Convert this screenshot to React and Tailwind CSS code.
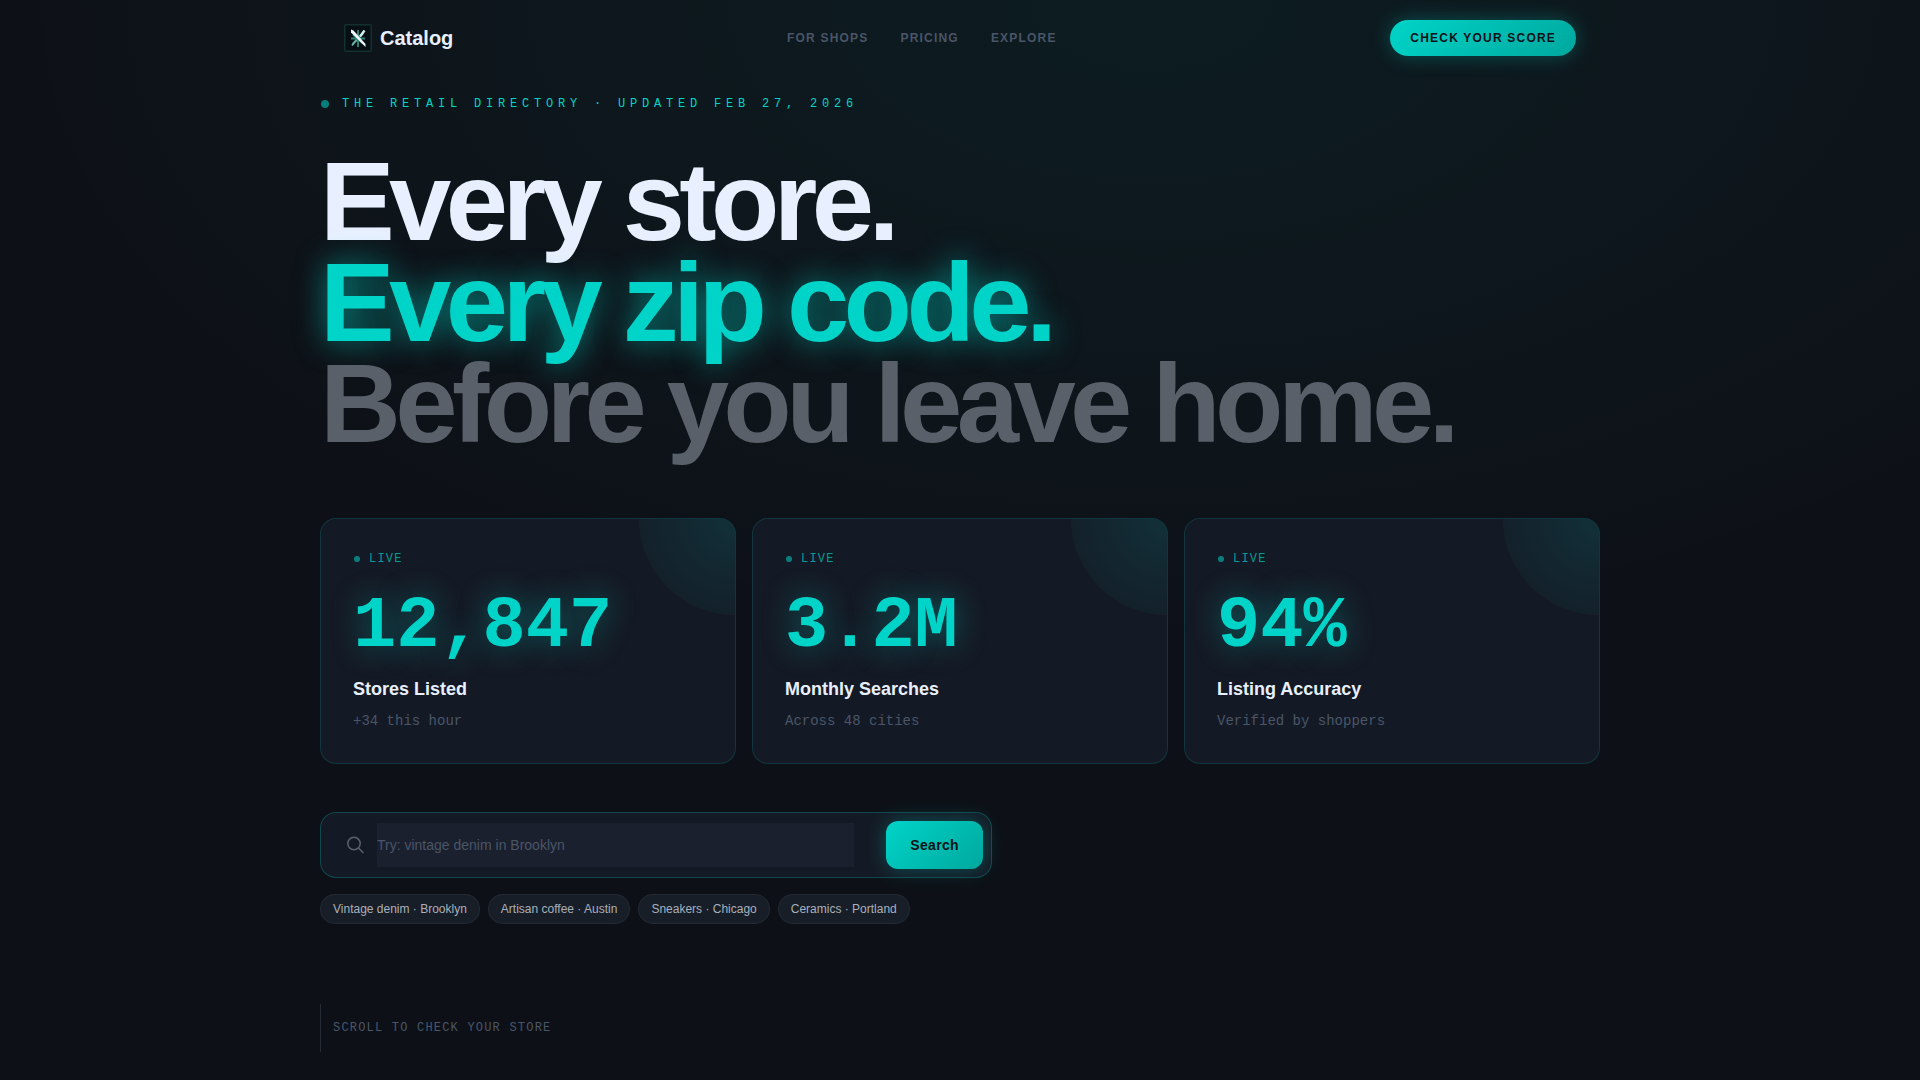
import React, { useState } from "react";

const navLinks = ["For Shops", "Pricing", "Explore"];

const stats = [
  { value: "12,847", label: "Stores Listed", note: "+34 this hour" },
  { value: "3.2M", label: "Monthly Searches", note: "Across 48 cities" },
  { value: "94%", label: "Listing Accuracy", note: "Verified by shoppers" },
];

const suggestions = [
  "Vintage denim · Brooklyn",
  "Artisan coffee · Austin",
  "Sneakers · Chicago",
  "Ceramics · Portland",
];

const Logo = () => (
  <svg width="28" height="28" viewBox="0 0 28 28" fill="none" aria-hidden="true">
    <rect x="0.75" y="0.75" width="26.5" height="26.5" rx="1" fill="#080f14" stroke="#12302f" strokeWidth="1.5" />
    <path d="M14 6v17M7 14.5h14M8.5 20l11-11M9 10.5l10 9" stroke="#2f7f74" strokeWidth="2" />
    <path d="M20.5 6.5L16 12.5" stroke="#d5efeb" strokeWidth="2.4" />
    <path d="M12.5 16L8 21.5" stroke="#6fb5a9" strokeWidth="1.8" />
    <path d="M7 5.5l2.5 1L21.5 20v3L7 8.5z" fill="#f1f8fa" />
  </svg>
);

const Navbar = () => (
  <header className="mx-auto flex w-full max-w-7xl items-center justify-between px-6 py-5">
    <a href="#" className="flex items-center gap-2 text-xl leading-7 font-bold text-[#e8f0ff]">
      <Logo />
      Catalog
    </a>
    <nav className="flex items-center gap-8">
      {navLinks.map((link) => (
        <a
          key={link}
          href="#"
          className="text-xs font-bold tracking-widest text-[#4a5568] uppercase"
        >
          {link}
        </a>
      ))}
    </nav>
    <button className="rounded-full bg-linear-135 from-[#00d4c8] to-[#00a89e] px-5 py-[10px] text-xs leading-4 font-bold tracking-widest text-[#0d1117] uppercase shadow-[0_0_20px_rgba(0,212,200,0.3)]">
      Check your score
    </button>
  </header>
);

const StatCard = ({ value, label, note }) => (
  <div className="relative flex-1 overflow-hidden rounded-2xl border border-[#00d4c8]/15 bg-[#141a25] p-8">
    <div className="absolute top-0 right-0 size-48 translate-x-1/2 -translate-y-1/2 rounded-full bg-radial from-[#00d4c8]/12 to-[#00d4c8]/0" />
    <p className="mb-6 flex items-center gap-2 font-['Liberation_Mono',monospace] text-xs tracking-widest text-[#00d4c8]/70">
      <span className="mx-px size-[6px] rounded-full bg-[#00d4c8]/55" />
      LIVE
    </p>
    <p className="mb-3 font-['Liberation_Mono',monospace] text-7xl leading-none font-bold text-[#00d4c8] [text-shadow:0_0_30px_rgba(0,212,200,0.4)]">
      {value}
    </p>
    <p className="mb-2 text-lg leading-7 font-bold text-[#e8f0ff]">{label}</p>
    <p className="font-['Liberation_Mono',monospace] text-sm text-[#4a5568]">{note}</p>
  </div>
);

const SearchForm = () => {
  const [query, setQuery] = useState("");

  return (
    <form
      onSubmit={(e) => e.preventDefault()}
      className="flex max-w-2xl items-center rounded-2xl border border-[#00d4c8]/25 bg-[#141a25] p-2"
    >
      <label htmlFor="search" aria-label="Search stores" className="pr-3 pl-[18px]">
        <svg width="18" height="18" viewBox="0 0 18 18" fill="none" stroke="#59616d" strokeWidth="1.5" aria-hidden="true">
          <circle cx="7" cy="7.5" r="6.2" />
          <path d="M11.5 12L16 16.5" strokeLinecap="round" />
        </svg>
      </label>
      <input
        id="search"
        type="text"
        value={query}
        onChange={(e) => setQuery(e.target.value)}
        placeholder="Try: vintage denim in Brooklyn"
        className="mr-8 min-w-0 flex-1 bg-[#1a202d] py-3 text-sm text-[#e8f0ff] outline-none placeholder:text-[#4a5568]"
      />
      <button
        type="submit"
        className="rounded-xl bg-linear-135 from-[#00d4c8] to-[#00a89e] px-6 py-[14px] text-sm font-bold tracking-wide text-[#0d1117] shadow-[0_0_20px_rgba(0,212,200,0.3)]"
      >
        Search
      </button>
    </form>
  );
};

export default function App() {
  return (
    <div className="min-h-screen bg-[#0d1117] bg-[radial-gradient(ellipse_60%_60%_at_60%_0%,rgba(0,212,200,0.06),transparent)] font-['Liberation_Sans',Arial,sans-serif]">
      <Navbar />
      <main className="mx-auto w-full max-w-7xl">
        <p className="mt-5 flex items-center gap-3 font-['Liberation_Mono',monospace] text-xs tracking-[0.4em] text-[#00d4c8] uppercase">
          <span className="mx-px size-2 rounded-full bg-[#00d4c8]/55" />
          The retail directory · Updated Feb 27, 2026
        </p>

        <h1 className="mt-[39px] text-[112px] leading-[101px] font-bold tracking-tighter text-[#e8f0ff]">
          <span className="block">Every store.</span>
          <span className="block text-[#00d4c8] [text-shadow:0_0_30px_rgba(0,212,200,0.6)]">
            Every zip code.
          </span>
          <span className="block text-[#5a6069]">Before you leave home.</span>
        </h1>

        <section className="mt-16 flex gap-4">
          {stats.map((stat) => (
            <StatCard key={stat.label} {...stat} />
          ))}
        </section>

        <section className="mt-12">
          <SearchForm />
          <div className="mt-4 flex flex-wrap gap-2">
            {suggestions.map((item) => (
              <button
                key={item}
                className="rounded-full border border-white/5 bg-[#181e27] px-3 py-[6px] text-xs text-[#a9b0bb]"
              >
                {item}
              </button>
            ))}
          </div>
        </section>

        <div className="mt-20 flex h-12 items-center border-l border-[#242a33] pl-3">
          <p className="font-['Liberation_Mono',monospace] text-xs tracking-widest text-[#4a5568]">
            SCROLL TO CHECK YOUR STORE
          </p>
        </div>
      </main>
    </div>
  );
}
